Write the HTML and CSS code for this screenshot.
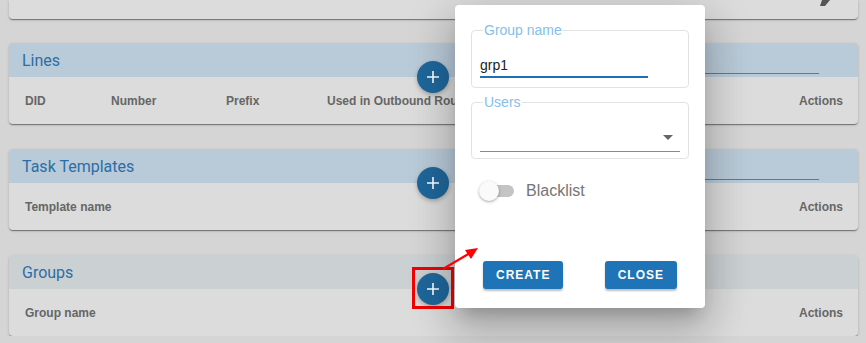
FILE: index.html
```html
<!DOCTYPE html>
<html lang="en">
<head>
    <meta charset="UTF-8">
    <meta name="viewport" content="width=device-width, initial-scale=1.0">
    <title>Groups</title>
    <link rel="stylesheet" href="styles.css">
</head>
<body>
    <div class="page">
        <section class="card card-top">
            <svg class="top-icon" width="10" height="6" viewBox="0 0 10 6"><polygon points="2,0 10,0 5,6 0,6" fill="#555"/></svg>
        </section>

        <section class="card">
            <header class="card-head">
                <h2>Lines</h2>
                <div class="search"></div>
            </header>
            <div class="card-body cols">
                <span>DID</span>
                <span>Number</span>
                <span>Prefix</span>
                <span>Used in Outbound Routes</span>
                <span class="actions">Actions</span>
            </div>
            <button class="fab"><svg width="12" height="12" viewBox="0 0 12 12"><path d="M6 0v12M0 6h12" stroke="#fff" stroke-width="1.6"/></svg></button>
        </section>

        <section class="card">
            <header class="card-head">
                <h2>Task Templates</h2>
                <div class="search"></div>
            </header>
            <div class="card-body cols">
                <span class="wide">Template name</span>
                <span class="actions">Actions</span>
            </div>
            <button class="fab"><svg width="12" height="12" viewBox="0 0 12 12"><path d="M6 0v12M0 6h12" stroke="#fff" stroke-width="1.6"/></svg></button>
        </section>

        <section class="card">
            <header class="card-head grey">
                <h2>Groups</h2>
            </header>
            <div class="card-body cols">
                <span class="wide">Group name</span>
                <span class="actions">Actions</span>
            </div>
            <button class="fab"><svg width="12" height="12" viewBox="0 0 12 12"><path d="M6 0v12M0 6h12" stroke="#fff" stroke-width="1.6"/></svg></button>
            <div class="mark-box"></div>
        </section>
    </div>

    <div class="dialog">
        <fieldset class="field">
            <legend>Group name</legend>
            <div class="text-input">grp1</div>
        </fieldset>
        <fieldset class="field">
            <legend>Users</legend>
            <div class="select-input"><span class="caret"></span></div>
        </fieldset>
        <div class="switch-row">
            <span class="switch"><span class="thumb"></span></span>
            <span class="switch-label">Blacklist</span>
        </div>
        <div class="dialog-actions">
            <button class="btn">CREATE</button>
            <button class="btn">CLOSE</button>
        </div>
    </div>

    <!-- flecha de anotacion -->
    <svg class="mark-arrow" width="50" height="40" viewBox="0 0 50 40">
        <line x1="5" y1="31" x2="32" y2="15" stroke="#f00" stroke-width="2.2"/>
        <polygon points="40,10 27,12 33,21" fill="#f00"/>
    </svg>
</body>
</html>
```

FILE: styles.css
```css
* {
    margin: 0;
    padding: 0;
    box-sizing: border-box;
}

body, html {
    font-family: "Liberation Sans", Arial, sans-serif;
    background-color: #d5d5d5;
    overflow: hidden;
}

.page {
    display: flex;
    flex-direction: column;
    gap: 25px;
    padding: 0 8px 0 9px;
}

.card {
    position: relative;
    background-color: #dcdcdc;
    border-radius: 4px;
    box-shadow: 0 2px 1px -1px rgba(0,0,0,.25), 0 1px 1px 0 rgba(0,0,0,.2), 0 1px 3px 0 rgba(0,0,0,.15);
}

.card-top {
    height: 19px;
    margin-bottom: -1px;
    border-radius: 0 0 4px 4px;
}

.top-icon {
    position: absolute;
    right: 28px;
    top: 0;
}

.card-head {
    height: 34px;
    background-color: #b9cad8;
    border-radius: 4px 4px 0 0;
    display: flex;
    align-items: center;
    justify-content: space-between;
    padding: 0 39px 0 13px;
}

.card-head.grey {
    background-color: #cbd0d3;
}

.card-head h2 {
    font-family: Roboto, "Liberation Sans", sans-serif;
    font-size: 16px;
    font-weight: 400;
    color: #2b6ea6;
}

.search {
    align-self: flex-end;
    width: 270px;
    height: 1px;
    margin-bottom: 3px;
    background-color: #6f777d;
}

.card-body {
    height: 47px;
}

.cols {
    display: grid;
    grid-template-columns: 86px 115px 101px 1fr auto;
    align-items: center;
    padding: 0 15px 0 16px;
    font-size: 12px;
    font-weight: 700;
    color: #666;
    white-space: nowrap;
}

.cols .wide {
    grid-column: 1 / 5;
}

.fab {
    position: absolute;
    left: 408px;
    top: 18px;
    width: 32px;
    height: 32px;
    border: none;
    border-radius: 50%;
    background-color: #1f679b;
    display: flex;
    align-items: center;
    justify-content: center;
    box-shadow: 0 2px 4px rgba(0,0,0,.25);
}

.mark-box {
    position: absolute;
    left: 403px;
    top: 12px;
    width: 42px;
    height: 42px;
    border: 3px solid #f20000;
}

.mark-arrow {
    position: absolute;
    left: 438px;
    top: 238px;
}

.dialog {
    position: absolute;
    left: 455px;
    top: 5px;
    width: 250px;
    height: 303px;
    background-color: #fff;
    border-radius: 4px;
    padding: 18px 16px 0 16px;
    box-shadow: 0 11px 15px -7px rgba(0,0,0,.2), 0 24px 38px 3px rgba(0,0,0,.14), 0 9px 46px 8px rgba(0,0,0,.12);
}

.field {
    border: 1px solid #e2e2e2;
    border-radius: 4px;
    padding: 0 8px;
    height: 65px;
    margin-bottom: 7px;
}

.field + .field {
    height: 64px;
}

.field legend {
    font-size: 14px;
    color: #86c0ea;
    padding: 0 1px;
    margin-left: 3px;
    line-height: 14px;
}

.text-input {
    width: 168px;
    margin-top: 20px;
    font-size: 14px;
    color: #222;
    padding-bottom: 3px;
    border-bottom: 2px solid #1f6fb5;
}

.select-input {
    position: relative;
    height: 35px;
    margin-top: 8px;
    border-bottom: 1px solid #8a8a8a;
}

.caret {
    position: absolute;
    right: 7px;
    top: 18px;
    border-left: 5px solid transparent;
    border-right: 5px solid transparent;
    border-top: 5px solid #666;
}

.switch-row {
    display: flex;
    align-items: center;
    gap: 12px;
    margin-top: 23px;
    padding-left: 10px;
}

.switch {
    position: relative;
    width: 33px;
    height: 12px;
    border-radius: 6px;
    background-color: #c4c4c4;
}

.thumb {
    position: absolute;
    left: -2px;
    top: -4px;
    width: 20px;
    height: 20px;
    border-radius: 50%;
    background-color: #fafafa;
    box-shadow: 0 1px 3px rgba(0,0,0,.35);
}

.switch-label {
    font-size: 16px;
    color: #757575;
}

.dialog-actions {
    display: flex;
    justify-content: space-between;
    margin-top: 61px;
    padding: 0 12px 0 12px;
}

.btn {
    height: 28px;
    padding: 0 13px;
    border: none;
    border-radius: 3px;
    background-color: #1e74b6;
    color: #fff;
    font-family: "Liberation Sans", Arial, sans-serif;
    font-size: 12px;
    font-weight: 700;
    letter-spacing: 1px;
    box-shadow: 0 2px 2px rgba(0,0,0,.25);
}
```
